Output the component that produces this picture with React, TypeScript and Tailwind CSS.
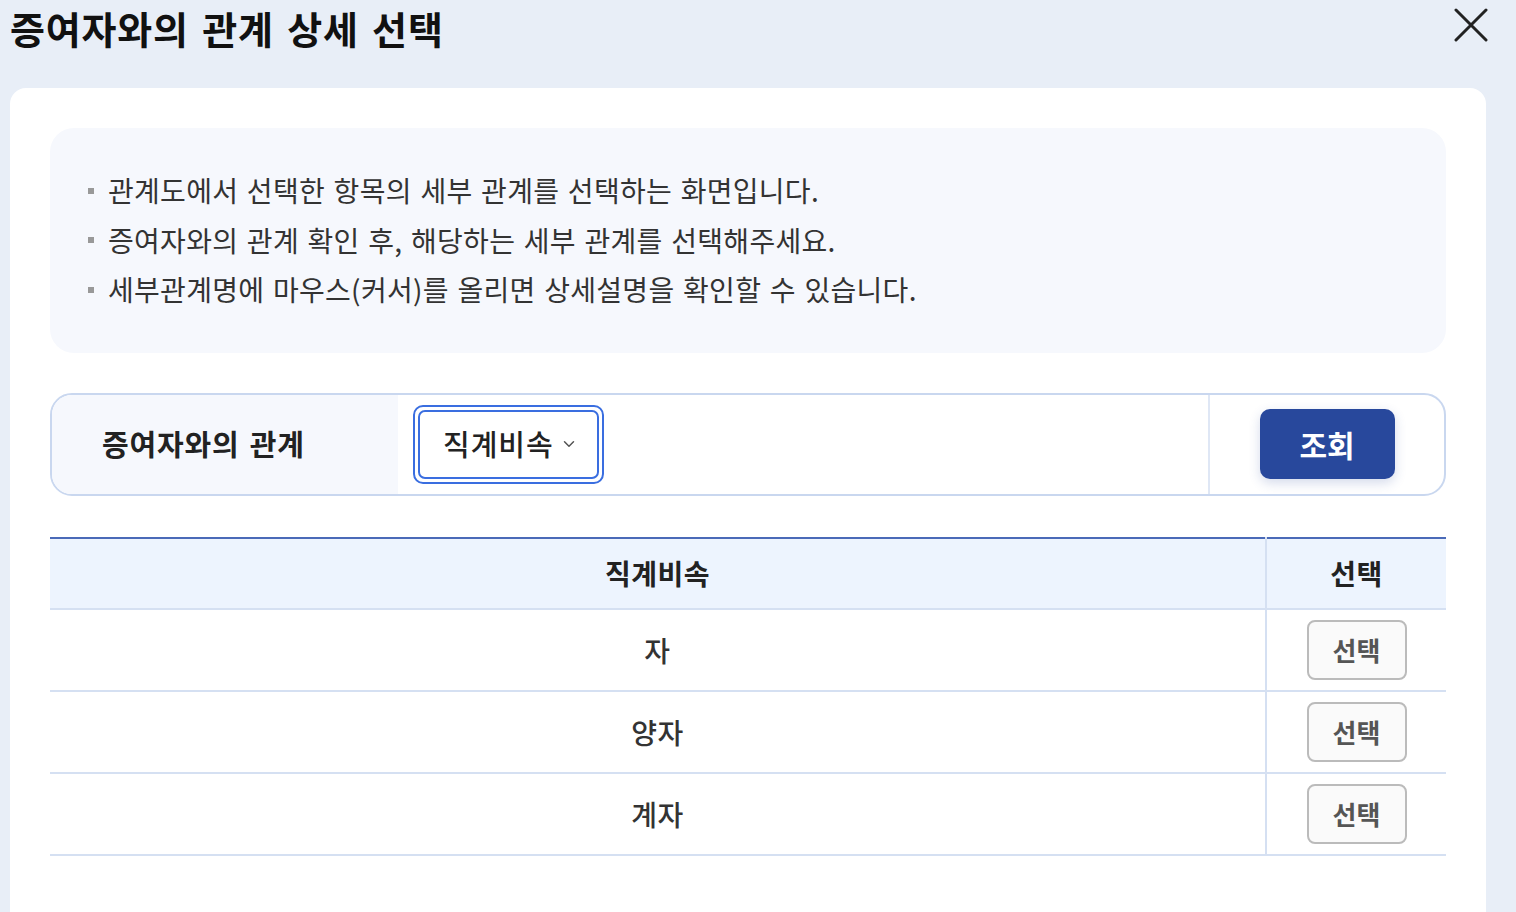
import { ChevronDown } from "lucide-react";

const ROWS = ["자", "양자", "계자"];

const NOTES = [
  "관계도에서 선택한 항목의 세부 관계를 선택하는 화면입니다.",
  "증여자와의 관계 확인 후, 해당하는 세부 관계를 선택해주세요.",
  "세부관계명에 마우스(커서)를 올리면 상세설명을 확인할 수 있습니다.",
];

export default function App() {
  return (
    <div
      className="h-[912px] overflow-hidden bg-[#e8eef7] text-[#222]"
      style={{ fontFamily: '"Noto Sans CJK KR", "Noto Sans", sans-serif' }}
    >
      {/* Header */}
      <div className="flex h-[88px] items-start justify-between pl-[10px] pr-[28px]">
        <h1 className="pt-[2px] text-[38px] font-bold leading-[52px] tracking-[0.8px] [word-spacing:4px] text-[#111]">
          증여자와의 관계 상세 선택
        </h1>
        <button className="mt-[8px] flex h-[34px] w-[34px] items-center justify-center text-[#222]">
          <svg viewBox="0 0 34 34" className="h-[34px] w-[34px]" fill="none" stroke="currentColor" strokeWidth="3" strokeLinecap="round">
            <path d="M2 2 L32 32 M32 2 L2 32" />
          </svg>
        </button>
      </div>

      {/* Card */}
      <div className="ml-[10px] mr-[30px] h-[900px] rounded-t-[16px] bg-white px-[40px] pt-[40px]">
        {/* Notes */}
        <div className="rounded-[24px] bg-[#f6f8fd] px-[38px] py-[38px]">
          <ul className="flex flex-col">
            {NOTES.map((t) => (
              <li key={t} className="flex items-center text-[28px] leading-[49.5px] tracking-[0.3px] [word-spacing:2px] text-[#333]">
                <span className="mr-[14px] h-[6px] w-[6px] shrink-0 bg-[#999]" />
                {t}
              </li>
            ))}
          </ul>
        </div>

        {/* Search row */}
        <div className="mt-[40px] flex h-[103px] overflow-hidden rounded-[22px] border-2 border-[#c9d7ef]">
          <div className="flex w-[346px] items-center bg-[#f6f8fd] pl-[50px] text-[29px] font-bold tracking-[0.8px] [word-spacing:3px] text-[#222]">
            증여자와의 관계
          </div>
          <div className="flex flex-1 items-center pl-[15px]">
            <div className="rounded-[10px] border-2 border-[#3a6ee0] p-[3px]">
              <div className="flex h-[69px] w-[181px] items-center rounded-[7px] border-2 border-[#3a6ee0] pl-[23px] text-[29px] font-medium tracking-[1px] text-[#222]">
                직계비속
                <ChevronDown className="ml-[6px] h-[18px] w-[18px] text-[#555]" strokeWidth={2} />
              </div>
            </div>
          </div>
          <div className="flex w-[236px] items-center justify-center border-l-2 border-[#dfe7f5]">
            <button className="h-[70px] w-[135px] rounded-[10px] bg-[#28489c] text-[30px] font-bold text-white shadow-[0_4px_12px_rgba(40,72,156,0.2)]">
              조회
            </button>
          </div>
        </div>

        {/* Table */}
        <table className="mt-[41px] w-full border-collapse border-t-2 border-[#4a6ab8]">
          <thead>
            <tr className="h-[71px] bg-[#edf4fe]">
              <th className="border-b-2 border-[#d5e0f2] text-[28px] font-bold tracking-[0.5px] text-[#222]">직계비속</th>
              <th className="w-[180px] border-b-2 border-l-2 border-[#d5e0f2] text-[28px] font-bold tracking-[0.5px] text-[#222]">선택</th>
            </tr>
          </thead>
          <tbody>
            {ROWS.map((r) => (
              <tr key={r} className="h-[82px]">
                <td className="border-b-2 border-[#d5e0f2] text-center text-[28px] font-medium tracking-[0.5px] text-[#333]">{r}</td>
                <td className="border-b-2 border-l-2 border-[#d5e0f2] text-center">
                  <button className="h-[60px] w-[100px] rounded-[8px] border-2 border-[#bbbbbb] bg-[#fafafa] text-[26px] font-bold text-[#555]">
                    선택
                  </button>
                </td>
              </tr>
            ))}
          </tbody>
        </table>
      </div>
    </div>
  );
}
